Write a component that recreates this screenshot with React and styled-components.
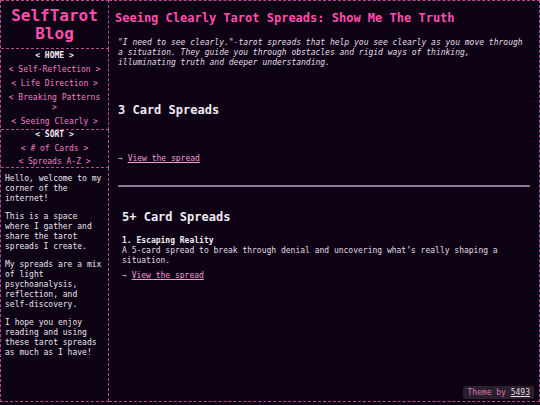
import React from 'react'
import styled, { createGlobalStyle } from 'styled-components'

const GlobalStyle = createGlobalStyle`
  html, body {
    margin: 0;
    padding: 0;
    background: #0d0214;
  }
  body {
    font-family: "DejaVu Sans Mono", "Liberation Mono", monospace;
    color: #e8e0ea;
  }
  * { box-sizing: border-box; }
`

const pinkLine = '1px dashed #b24c93'

const Page = styled.div`
  display: flex;
  height: 402px;
  width: 540px;
`

const Sidebar = styled.aside`
  width: 109px;
  flex-shrink: 0;
  display: flex;
  flex-direction: column;
  border-left: ${pinkLine};
  border-bottom: ${pinkLine};
`

const Block = styled.div`
  border-right: ${pinkLine};
  border-top: ${(p) => (p.$first ? pinkLine : 'none')};
  border-bottom: ${(p) => (p.$last ? 'none' : pinkLine)};
  padding: ${(p) => p.$pad || '2px 3px'};
  flex: ${(p) => (p.$grow ? 1 : 'none')};
`

const BlogTitle = styled.h1`
  margin: 0;
  font-size: 16px;
  line-height: 18px;
  font-weight: bold;
  color: #ff4fae;
  text-align: center;
`

const NavList = styled.ul`
  list-style: none;
  margin: 0;
  padding: 0;
  text-align: center;
  font-size: 8px;
  line-height: 10px;
`

const NavItem = styled.li`
  margin-bottom: ${(p) => p.$gap || '4px'};
  color: ${(p) => (p.$head ? '#f4eef4' : '#f07ec4')};
  font-weight: ${(p) => (p.$head ? 'bold' : 'normal')};
  &:last-child { margin-bottom: 0; }
`

const About = styled.div`
  font-size: 8px;
  line-height: 10px;
  color: #ece6ee;
  p { margin: 0 0 8px; }
`

const Main = styled.main`
  flex: 1;
  border-top: ${pinkLine};
  border-right: ${pinkLine};
  border-bottom: ${pinkLine};
  padding: 10px 9px 0 6px;
`

const PageTitle = styled.h2`
  margin: 0 0 13px;
  font-size: 12px;
  line-height: 14px;
  font-weight: bold;
  color: #ff4fae;
`

const Quote = styled.p`
  margin: 0 0 0 3px;
  font-size: 8px;
  line-height: 9.8px;
  font-style: italic;
  color: #e4dce6;
`

const Section = styled.section`
  padding-left: ${(p) => p.$indent || '3px'};
`

const SectionTitle = styled.h3`
  margin: ${(p) => p.$margin || '0'};
  font-size: 12px;
  line-height: 14px;
  font-weight: bold;
  color: #f2ecf4;
`

const ItemTitle = styled.div`
  font-size: 8px;
  line-height: 10px;
  font-weight: bold;
  color: #f2ecf4;
`

const ItemText = styled.div`
  font-size: 8px;
  line-height: 10px;
  color: #e4dce6;
`

const More = styled.div`
  font-size: 8px;
  line-height: 10px;
  color: #b8a8bc;
  margin: ${(p) => p.$margin || '0'};
  a {
    color: #f39ad4;
    text-decoration: underline;
  }
`

const Rule = styled.hr`
  margin: 21px 0 0 3px;
  border: none;
  height: 2px;
  background: #8a7c92;
`

const Badge = styled.div`
  position: fixed;
  right: 6px;
  bottom: 6px;
  padding: 1px 4px;
  background: #2b1f2c;
  border-radius: 2px;
  font-size: 8px;
  line-height: 11px;
  color: #d574b6;
  a {
    color: #e4dce6;
    text-decoration: underline;
  }
`

export default function App() {
  return (
    <>
      <GlobalStyle />
      <Page>
        <Sidebar>
          <Block $first $pad="6px 3px 5px">
            <BlogTitle>SelfTarot<br />Blog</BlogTitle>
          </Block>
          <Block $pad="2px 3px 2px">
            <NavList>
              <NavItem $head>&lt; HOME &gt;</NavItem>
              <NavItem>&lt; Self-Reflection &gt;</NavItem>
              <NavItem>&lt; Life Direction &gt;</NavItem>
              <NavItem>&lt; Breaking Patterns &gt;</NavItem>
              <NavItem>&lt; Seeing Clearly &gt;</NavItem>
            </NavList>
          </Block>
          <Block $pad="0 3px 0">
            <NavList>
              <NavItem $head $gap="3.5px">&lt; SORT &gt;</NavItem>
              <NavItem $gap="3.5px">&lt; # of Cards &gt;</NavItem>
              <NavItem $gap="3.5px">&lt; Spreads A-Z &gt;</NavItem>
            </NavList>
          </Block>
          <Block $last $grow $pad="6px 3px 4px 4px">
            <About>
              <p>Hello, welcome to my corner of the internet!</p>
              <p>This is a space where I gather and share the tarot spreads I create.</p>
              <p>My spreads are a mix of light psychoanalysis, reflection, and self-discovery.</p>
              <p>I hope you enjoy reading and using these tarot spreads as much as I have!</p>
            </About>
          </Block>
        </Sidebar>
        <Main>
          <PageTitle>Seeing Clearly Tarot Spreads: Show Me The Truth</PageTitle>
          <Quote>
            "I need to see clearly."-tarot spreads that help you see clearly as you move through
            a situation. They guide you through obstacles and rigid ways of thinking,
            illuminating truth and deeper understanding.
          </Quote>
          <Section>
            <SectionTitle $margin="36px 0 0">3 Card Spreads</SectionTitle>
            <More $margin="37px 0 0">→ <a href="#">View the spread</a></More>
          </Section>
          <Rule />
          <Section $indent="7px">
            <SectionTitle $margin="23px 0 12px">5+ Card Spreads</SectionTitle>
            <ItemTitle>1. Escaping Reality</ItemTitle>
            <ItemText>
              A 5-card spread to break through denial and uncovering what’s really shaping a
              situation.
            </ItemText>
            <More $margin="5px 0 0">→ <a href="#">View the spread</a></More>
          </Section>
        </Main>
      </Page>
      <Badge>Theme by <a href="#">5493</a></Badge>
    </>
  )
}
